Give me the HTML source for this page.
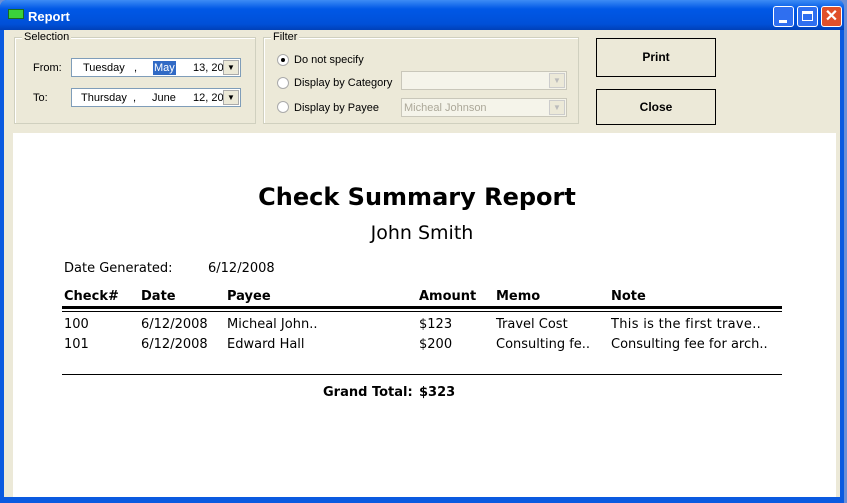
<!DOCTYPE html>
<html><head><style>
*{margin:0;padding:0;box-sizing:border-box}
body{width:847px;height:503px;overflow:hidden;background:#6b8fd6;position:relative;font-family:"Liberation Sans",Tahoma,sans-serif;font-size:11px}
.a{position:absolute;white-space:nowrap}
.r{font-family:"DejaVu Sans",Verdana,sans-serif;font-size:13px;color:#000}
.gb{position:absolute;border:1px solid #d0d0bf;box-shadow:inset 1px 1px 0 #fff}
.gl{position:absolute;background:#ece9d8;padding:0 2px;top:-7px;left:7px}
.dt{position:absolute;background:#fff;border:1px solid #7f9db9;height:19px}
.dd{position:absolute;right:1px;top:1px;width:16px;height:15px;background:#ece9d8;border:1px solid #aaa;font-size:8px;text-align:center;line-height:14px}
.rad{position:absolute;width:12px;height:12px;border-radius:50%;border:1px solid #aaa;background:#fff}
.btn{position:absolute;border:1px solid #000;background:#ece9d8;font-weight:bold;text-align:center;font-size:12px}
</style></head><body>
<div class="a" style="left:0;top:0;width:844px;height:503px;background:#0a5ae0;border-radius:7px 7px 0 0"></div>
<div class="a" style="left:0;top:0;width:844px;height:30px;background:linear-gradient(#3d8cf5,#0058e6 30%,#0050d8 80%,#0040b8);border-radius:7px 7px 0 0"></div>
<div class="a" style="left:8px;top:9px;width:16px;height:10px;background:#3bd13b;border:1px solid #1a6b1a"></div>
<div class="a" style="left:28px;top:9px;color:#fff;font-weight:bold;font-size:13px">Report</div>
<div class="a" style="left:773px;top:6px;width:21px;height:21px;background:#2f6ff0;border:1px solid #fff;border-radius:3px"><div style="position:absolute;left:5px;top:13px;width:8px;height:3px;background:#fff"></div></div>
<div class="a" style="left:797px;top:6px;width:21px;height:21px;background:#2f6ff0;border:1px solid #fff;border-radius:3px"><div style="position:absolute;left:4px;top:4px;width:11px;height:10px;border:1px solid #fff;border-top-width:3px"></div></div>
<div class="a" style="left:821px;top:6px;width:21px;height:21px;background:#e0502a;border:1px solid #fff;border-radius:3px;color:#fff;font-size:16px;font-weight:bold;text-align:center;line-height:19px">✕</div>
<div class="a" style="left:4px;top:30px;width:836px;height:467px;background:#ece9d8"></div>
<div class="gb" style="left:14px;top:37px;width:242px;height:87px"><div class="gl">Selection</div></div>
<div class="a" style="left:33px;top:62px">From:</div>
<div class="a" style="left:33px;top:92px">To:</div>
<div class="dt" style="left:71px;top:58px;width:170px"><span class="a" style="left:11px;top:3px">Tuesday &nbsp;&nbsp;,</span><span class="a" style="left:81px;top:2px;background:#316ac5;color:#fff;padding:1px">May</span><span class="a" style="left:121px;top:3px">13, 20</span><div class="dd">▼</div></div>
<div class="dt" style="left:71px;top:88px;width:170px"><span class="a" style="left:9px;top:3px">Thursday &nbsp;,</span><span class="a" style="left:80px;top:3px">June</span><span class="a" style="left:121px;top:3px">12, 20</span><div class="dd">▼</div></div>
<div class="gb" style="left:263px;top:37px;width:316px;height:87px"><div class="gl">Filter</div></div>
<div class="rad" style="left:277px;top:54px"><div style="position:absolute;left:3px;top:3px;width:4px;height:4px;background:#000;border-radius:50%"></div></div>
<div class="rad" style="left:277px;top:77px"></div>
<div class="rad" style="left:277px;top:101px"></div>
<div class="a" style="left:294px;top:54px">Do not specify</div>
<div class="a" style="left:294px;top:77px">Display by Category</div>
<div class="a" style="left:294px;top:102px">Display by Payee</div>
<div class="dt" style="left:401px;top:71px;width:166px;border-color:#c9c7ba;background:#f5f4ea"><div class="dd" style="color:#bbb;border-color:#ccc">▼</div></div>
<div class="dt" style="left:401px;top:98px;width:166px;border-color:#c9c7ba;background:#f5f4ea"><span class="a" style="left:2px;top:3px;color:#aca899">Micheal Johnson</span><div class="dd" style="color:#bbb;border-color:#ccc">▼</div></div>
<div class="btn" style="left:596px;top:38px;width:120px;height:39px;line-height:36px">Print</div>
<div class="btn" style="left:596px;top:89px;width:120px;height:36px;line-height:34px">Close</div>
<div class="a" style="left:13px;top:133px;width:823px;height:364px;background:#fff"></div>
<div class="a r" style="left:0;width:834px;text-align:center;top:183px;font-size:24px;font-weight:bold">Check Summary Report</div>
<div class="a r" style="left:0;width:844px;text-align:center;top:222px;font-size:19px">John Smith</div>
<div class="a r" style="left:64px;top:261px">Date Generated:</div>
<div class="a r" style="left:208px;top:261px">6/12/2008</div>
<div class="a r" style="left:64px;top:289px;font-weight:bold">Check#</div>
<div class="a r" style="left:141px;top:289px;font-weight:bold">Date</div>
<div class="a r" style="left:227px;top:289px;font-weight:bold">Payee</div>
<div class="a r" style="left:419px;top:289px;font-weight:bold">Amount</div>
<div class="a r" style="left:496px;top:289px;font-weight:bold">Memo</div>
<div class="a r" style="left:611px;top:289px;font-weight:bold">Note</div>
<div class="a" style="left:62px;top:306px;width:720px;height:3px;background:#000"></div>
<div class="a" style="left:62px;top:311px;width:720px;height:1px;background:#000"></div>
<div class="a r" style="left:64px;top:317px">100</div>
<div class="a r" style="left:141px;top:317px">6/12/2008</div>
<div class="a r" style="left:227px;top:317px">Micheal John..</div>
<div class="a r" style="left:419px;top:317px">$123</div>
<div class="a r" style="left:496px;top:317px">Travel Cost</div>
<div class="a r" style="left:611px;top:317px;letter-spacing:0.3px">This is the first trave..</div>
<div class="a r" style="left:64px;top:337px">101</div>
<div class="a r" style="left:141px;top:337px">6/12/2008</div>
<div class="a r" style="left:227px;top:337px">Edward Hall</div>
<div class="a r" style="left:419px;top:337px">$200</div>
<div class="a r" style="left:496px;top:337px">Consulting fe..</div>
<div class="a r" style="left:611px;top:337px">Consulting fee for arch..</div>
<div class="a" style="left:62px;top:374px;width:720px;height:1px;background:#000"></div>
<div class="a r" style="left:323px;top:385px;font-weight:bold">Grand Total:</div>
<div class="a r" style="left:419px;top:385px;font-weight:bold">$323</div>
</body></html>
